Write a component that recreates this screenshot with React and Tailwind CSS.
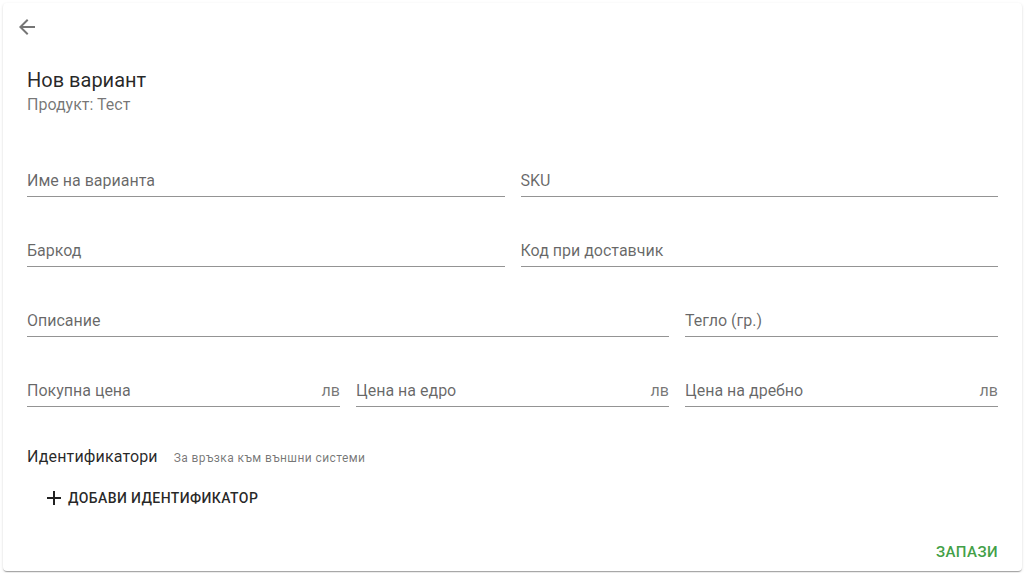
import React from 'react';

const font = { fontFamily: 'Roboto, "Noto Sans", "Liberation Sans", sans-serif' };

function Field({ label, suffix, className = '' }) {
    return (
        <div className={`h-[48px] flex items-end border-b border-[#949494] pb-[3px] ${className}`}>
            <span className="flex-1 text-[16px] leading-6 text-black/60">{label}</span>
            {suffix && <span className="text-[16px] leading-6 text-black/55">{suffix}</span>}
        </div>
    );
}

export default function App() {
    return (
        <div className="h-[573px] w-full bg-white px-[3px] pt-[3px] pb-[2px]" style={font}>
            <div className="h-full flex flex-col rounded bg-white shadow-[0_2px_1px_-1px_rgba(0,0,0,0.2),0_1px_1px_0_rgba(0,0,0,0.14),0_1px_3px_0_rgba(0,0,0,0.12)]">
                {/* back button */}
                <button className="w-12 h-12 flex items-center justify-center rounded-full">
                    <svg width="24" height="24" viewBox="0 0 24 24" fill="rgba(0,0,0,0.54)">
                        <path d="M20 11H7.83l5.59-5.59L12 4l-8 8 8 8 1.41-1.41L7.83 13H20v-2z" />
                    </svg>
                </button>

                <div className="px-6">
                    <div className="mt-[15px]">
                        <h2 className="text-[20px] leading-7 text-black/85">Нов вариант</h2>
                        <p className="text-[16px] leading-[22px] text-black/55">Продукт: Тест</p>
                    </div>

                    <div className="mt-[33px] grid grid-cols-6 gap-x-4 gap-y-[22px]">
                        <Field label="Име на варианта" className="col-span-3" />
                        <Field label="SKU" className="col-span-3" />
                        <Field label="Баркод" className="col-span-3" />
                        <Field label="Код при доставчик" className="col-span-3" />
                        <Field label="Описание" className="col-span-4" />
                        <Field label="Тегло (гр.)" className="col-span-2" />
                        <Field label="Покупна цена" suffix="лв" className="col-span-2" />
                        <Field label="Цена на едро" suffix="лв" className="col-span-2" />
                        <Field label="Цена на дребно" suffix="лв" className="col-span-2" />
                    </div>

                    <div className="mt-[38px] flex items-baseline gap-4">
                        <span className="text-[16px] leading-6 tracking-[0.15px] text-black/85">Идентификатори</span>
                        <span className="text-[12px] leading-5 text-black/55 tracking-[0.4px]">За връзка към външни системи</span>
                    </div>

                    <button className="mt-[8px] ml-[11px] h-[42px] px-1 flex items-center gap-[2px] rounded text-[14px] font-medium uppercase tracking-[0.4px] text-black/85">
                        <svg width="24" height="24" viewBox="0 0 24 24" fill="rgba(0,0,0,0.87)">
                            <path d="M19 13h-6v6h-2v-6H5v-2h6V5h2v6h6v2z" />
                        </svg>
                        Добави идентификатор
                    </button>
                </div>

                <div className="mt-auto flex justify-end px-4 pb-[1px]">
                    <button className="h-[36px] px-2 rounded text-[15px] font-medium uppercase tracking-[0.46px] text-[#43a047]">
                        Запази
                    </button>
                </div>
            </div>
        </div>
    );
}
